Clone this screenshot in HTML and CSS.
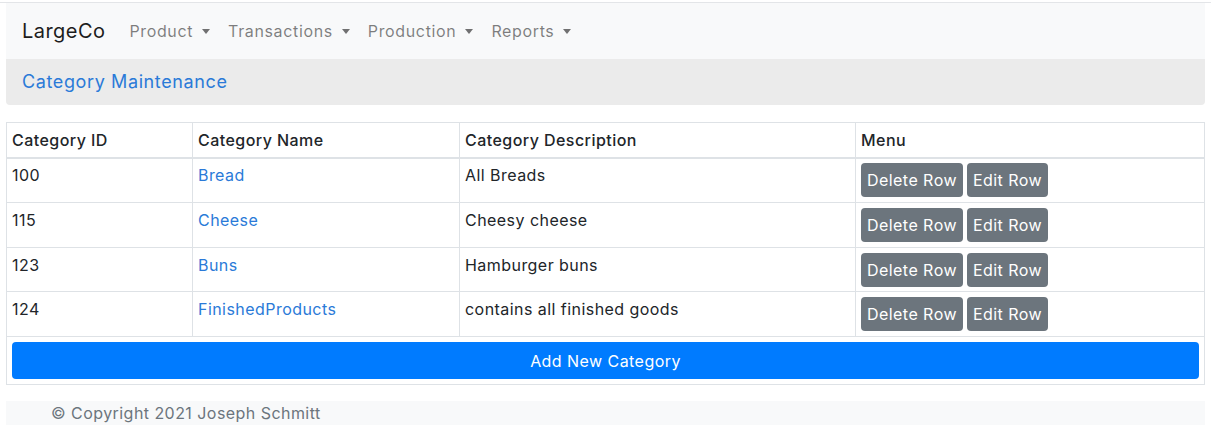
FILE: index.html
```html
<!DOCTYPE html>
<html lang="en">
<head>
<meta charset="utf-8">
<title>Category Maintenance</title>
<link rel="stylesheet" href="styles.css">
</head>
<body>
<div class="page">
  <nav class="navbar">
    <span class="brand">LargeCo</span>
    <ul class="nav">
      <li class="nav-link dropdown">Product</li>
      <li class="nav-link dropdown">Transactions</li>
      <li class="nav-link dropdown">Production</li>
      <li class="nav-link dropdown">Reports</li>
    </ul>
  </nav>
  <div class="title-bar"><a class="title-link" href="#">Category Maintenance</a></div>

  <table class="grid">
    <colgroup>
      <col class="c1"><col class="c2"><col class="c3"><col class="c4">
    </colgroup>
    <thead>
      <tr><th>Category ID</th><th>Category Name</th><th>Category Description</th><th>Menu</th></tr>
    </thead>
    <tbody>
      <tr>
        <td>100</td><td><a href="#">Bread</a></td><td>All Breads</td>
        <td><div class="actions"><button class="btn btn-gray">Delete Row</button><button class="btn btn-gray">Edit Row</button></div></td>
      </tr>
      <tr>
        <td>115</td><td><a href="#">Cheese</a></td><td>Cheesy cheese</td>
        <td><div class="actions"><button class="btn btn-gray">Delete Row</button><button class="btn btn-gray">Edit Row</button></div></td>
      </tr>
      <tr>
        <td>123</td><td><a href="#">Buns</a></td><td>Hamburger buns</td>
        <td><div class="actions"><button class="btn btn-gray">Delete Row</button><button class="btn btn-gray">Edit Row</button></div></td>
      </tr>
      <tr>
        <td>124</td><td><a href="#">FinishedProducts</a></td><td>contains all finished goods</td>
        <td><div class="actions"><button class="btn btn-gray">Delete Row</button><button class="btn btn-gray">Edit Row</button></div></td>
      </tr>
      <tr>
        <td colspan="4"><button class="btn btn-blue">Add New Category</button></td>
      </tr>
    </tbody>
  </table>

  <footer class="footer">© Copyright 2021 Joseph Schmitt</footer>
</div>
</body>
</html>
```
FILE: styles.css
```css
html, body {
  margin: 0;
  padding: 0;
  background: #fff;
}
body {
  font-family: Inter, "Noto Sans", sans-serif;
  font-size: 16px;
  line-height: 24px;
  letter-spacing: 0.028em;
  color: #212529;
}
.page {
  margin-top: 2px;
  border-top: 1px solid #e3e5e8;
  padding: 0 6px;
}
a {
  color: #2a7ad8;
  text-decoration: none;
}
.navbar {
  display: flex;
  align-items: center;
  height: 56px;
  padding: 0 16px;
  background: #f8f9fa;
}
.brand {
  font-size: 20px;
  color: #1d1d1d;
  margin-right: 15px;
}
.nav {
  display: flex;
  list-style: none;
  margin: 0;
  padding: 0;
}
.nav-link {
  padding: 8px 9px;
  color: rgba(0, 0, 0, 0.5);
  letter-spacing: 0.04em;
}
.dropdown::after {
  content: "";
  display: inline-block;
  margin-left: 9px;
  vertical-align: 3px;
  border-top: 5px solid rgba(0, 0, 0, 0.55);
  border-left: 4.5px solid transparent;
  border-right: 4.5px solid transparent;
}
.title-bar {
  background: #ebebeb;
  height: 46px;
  display: flex;
  align-items: center;
  padding: 0 16px;
  border-radius: 0 0 4px 4px;
  font-size: 18px;
  letter-spacing: 0.034em;
}
.title-link {
  color: #2a7ad8;
}
.grid {
  margin-top: 17px;
  width: 100%;
  border-collapse: collapse;
  table-layout: fixed;
  border: 1px solid #dee2e6;
}
.c1 { width: 186px; }
.c2 { width: 267px; }
.c3 { width: 396px; }
.c4 { width: auto; }
.grid th, .grid td {
  border: 1px solid #dee2e6;
  padding: 4.8px 5px;
  text-align: left;
  vertical-align: top;
}
.grid th {
  font-weight: 500;
  border-bottom: 2px solid #dee2e6;
}
.actions {
  display: flex;
  gap: 4px;
}
.btn {
  font-family: inherit;
  font-size: 16px;
  line-height: 24px;
  letter-spacing: 0.028em;
  color: #fff;
  border: 0;
  border-radius: 4px;
  cursor: pointer;
}
.btn-gray {
  background: #6c757d;
  padding: 5px 6px;
}
.btn-blue {
  display: block;
  width: 100%;
  background: #007bff;
  padding: 6.8px 12px;
}
.footer {
  margin-top: 16px;
  background: #f8f9fa;
  padding: 0 45px;
  color: #6c757d;
  line-height: 24px;
}
```
